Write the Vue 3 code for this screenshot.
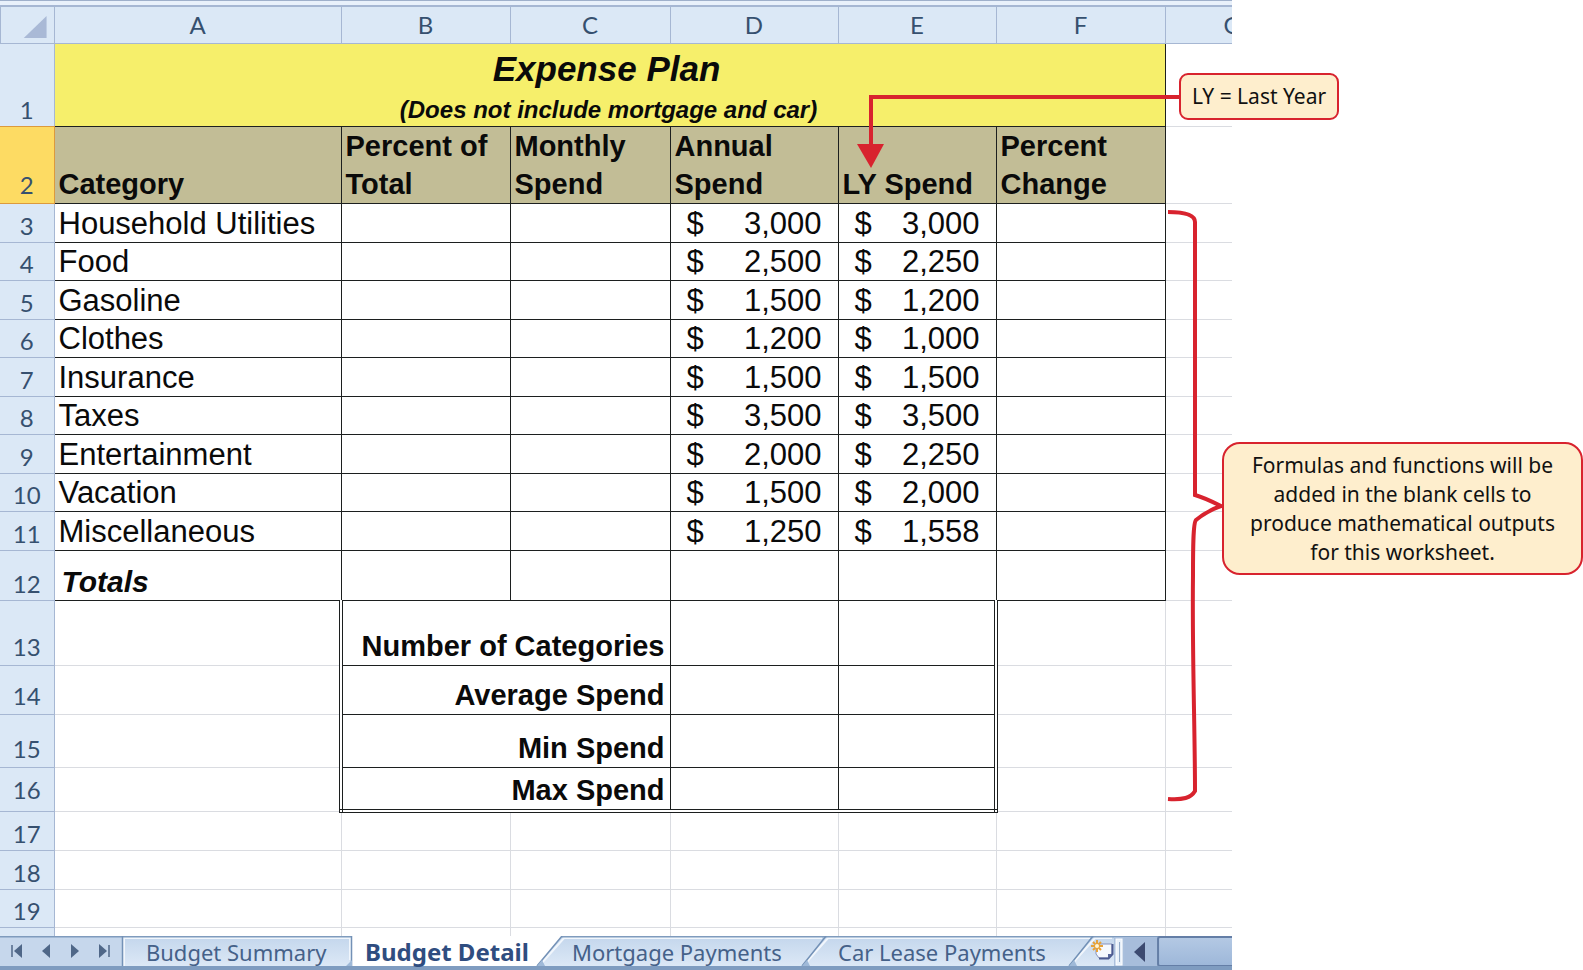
<script setup>
const columns = [
  { name: 'A', width: 287 },
  { name: 'B', width: 169 },
  { name: 'C', width: 160 },
  { name: 'D', width: 168 },
  { name: 'E', width: 158 },
  { name: 'F', width: 169 },
  { name: 'G', width: 67 },
]

const expenses = [
  { row: 3, height: 39, name: 'Household Utilities', annual: '3,000', last: '3,000' },
  { row: 4, height: 38, name: 'Food', annual: '2,500', last: '2,250' },
  { row: 5, height: 39, name: 'Gasoline', annual: '1,500', last: '1,200' },
  { row: 6, height: 38, name: 'Clothes', annual: '1,200', last: '1,000' },
  { row: 7, height: 39, name: 'Insurance', annual: '1,500', last: '1,500' },
  { row: 8, height: 38, name: 'Taxes', annual: '3,500', last: '3,500' },
  { row: 9, height: 39, name: 'Entertainment', annual: '2,000', last: '2,250' },
  { row: 10, height: 38, name: 'Vacation', annual: '1,500', last: '2,000' },
  { row: 11, height: 39, name: 'Miscellaneous', annual: '1,250', last: '1,558' },
]

const summaries = [
  { row: 13, height: 65, name: 'Number of Categories' },
  { row: 14, height: 49, name: 'Average Spend' },
  { row: 15, height: 53, name: 'Min Spend' },
  { row: 16, height: 44, name: 'Max Spend' },
]

const blanks = [
  { row: 17, height: 39 },
  { row: 18, height: 39 },
  { row: 19, height: 38 },
]
</script>

<template>
  <main class="page">
    <section class="window">
      <div class="strip"></div>
      <table class="sheet">
        <colgroup>
          <col class="col-head" />
          <col v-for="c in columns" :key="c.name" :style="{ width: c.width + 'px' }" />
        </colgroup>
        <thead>
          <tr class="letters">
            <th class="corner">
              <svg viewBox="0 0 54 34" aria-hidden="true">
                <path d="M47 8V30H24Z" fill="#a9b9d6" />
              </svg>
            </th>
            <th v-for="c in columns" :key="c.name" scope="col" :class="{ cut: c.name === 'G' }">{{ c.name }}</th>
          </tr>
        </thead>
        <tbody>
          <tr class="title-row">
            <th scope="row" class="num above-active">1</th>
            <td colspan="6" class="ink title">
              <div class="title-main">Expense Plan</div>
              <div class="title-sub">(Does not include mortgage and car)</div>
            </td>
            <td></td>
          </tr>
          <tr class="head-row">
            <th scope="row" class="num active">2</th>
            <td class="ink head">Category</td>
            <td class="ink head">Percent of<br />Total</td>
            <td class="ink head">Monthly<br />Spend</td>
            <td class="ink head">Annual<br />Spend</td>
            <td class="ink head">LY Spend</td>
            <td class="ink head">Percent<br />Change</td>
            <td></td>
          </tr>
          <tr v-for="e in expenses" :key="e.row" :style="{ height: e.height + 'px' }">
            <th scope="row" class="num">{{ e.row }}</th>
            <td class="ink">{{ e.name }}</td>
            <td class="ink"></td>
            <td class="ink"></td>
            <td class="ink"><div class="money"><span>$</span><span>{{ e.annual }}</span></div></td>
            <td class="ink"><div class="money"><span>$</span><span>{{ e.last }}</span></div></td>
            <td class="ink"></td>
            <td></td>
          </tr>
          <tr class="totals-row">
            <th scope="row" class="num">12</th>
            <td class="ink totals">Totals</td>
            <td v-for="n in 5" :key="n" class="ink"></td>
            <td></td>
          </tr>
          <tr v-for="(s, i) in summaries" :key="s.row" :style="{ height: s.height + 'px' }">
            <th scope="row" class="num low" :class="{ last: i === 3 }">{{ s.row }}</th>
            <td></td>
            <td colspan="2" class="ink label double-left" :class="{ 'double-bottom': i === 3 }">{{ s.name }}</td>
            <td class="ink" :class="{ 'double-bottom': i === 3 }"></td>
            <td class="ink double-right" :class="{ 'double-bottom': i === 3 }"></td>
            <td></td>
            <td></td>
          </tr>
          <tr v-for="b in blanks" :key="b.row" :style="{ height: b.height + 'px' }">
            <th scope="row" class="num">{{ b.row }}</th>
            <td v-for="n in 7" :key="n"></td>
          </tr>
          <tr class="partial">
            <th class="num"></th>
            <td v-for="n in 7" :key="n"></td>
          </tr>
        </tbody>
      </table>

      <nav class="tabs">
        <svg class="tabs-art" viewBox="0 0 1232 34" preserveAspectRatio="none" aria-hidden="true">
          <defs>
            <linearGradient id="tabFill" x1="0" y1="0" x2="0" y2="1">
              <stop offset="0" stop-color="#c3d6ec" />
              <stop offset="1" stop-color="#dce8f6" />
            </linearGradient>
            <linearGradient id="thumbFill" x1="0" y1="0" x2="0" y2="1">
              <stop offset="0" stop-color="#b4c9e4" />
              <stop offset="1" stop-color="#9db7d9" />
            </linearGradient>
          </defs>
          <rect width="1232" height="34" fill="#c6d7ec" />
          <path d="M122 0H1124V30H122Z" fill="url(#tabFill)" />
          <path d="M124 30V2H350V24M540 29L564 2H822M804 29L828 2H1090M1071 29L1095 2H1112" fill="none" stroke="#f1f6fc" stroke-width="2" />
          <path d="M352 0H562L537 30H352Z" fill="#fff" />
          <path d="M0 .5H352M562 .5H1232" stroke="#7f9bbd" stroke-width="2" />
          <path d="M122.500 0V30M351.500 0V30M562 0L537 30M826 0L802 30M1093 0L1069 30" fill="none" stroke="#7391b6" stroke-width="1.500" />
          <path d="M346 30l6-6v6zM537 30l5-6 3 6zM802 30l5-6 3 6zM1069 30l5-6 3 6z" fill="#9fb9d8" />
          <rect x="1114" y="1" width="10" height="29" fill="#a9bfdc" />
          <rect x="1116" y="3" width="6" height="26" fill="#e9f1fa" stroke="#fff" />
          <path d="M1119.500 6V26" stroke="#8fa8c8" />
          <rect x="1124" y="1" width="34" height="29" fill="#a7bddb" />
          <rect x="1158" y="1" width="78" height="29" rx="2" fill="url(#thumbFill)" stroke="#647ea6" stroke-width="2" />
          <rect y="30" width="1232" height="4" fill="#7f9cc0" />
        </svg>
        <div class="steps">
          <button type="button" aria-label="First sheet">
            <svg viewBox="0 0 14 14"><path d="M2 1V13" stroke="#4f6788" stroke-width="1.500" /><path d="M12 0V14L4 7Z" fill="#4f6788" /></svg>
          </button>
          <button type="button" aria-label="Previous sheet">
            <svg viewBox="0 0 14 14"><path d="M11 0V14L3 7Z" fill="#4f6788" /></svg>
          </button>
          <button type="button" aria-label="Next sheet">
            <svg viewBox="0 0 14 14"><path d="M3 0V14L11 7Z" fill="#4f6788" /></svg>
          </button>
          <button type="button" aria-label="Last sheet">
            <svg viewBox="0 0 14 14"><path d="M12 1V13" stroke="#4f6788" stroke-width="1.500" /><path d="M2 0V14L10 7Z" fill="#4f6788" /></svg>
          </button>
        </div>
        <button type="button" class="tab tab-summary">Budget Summary</button>
        <button type="button" class="tab tab-detail">Budget Detail</button>
        <button type="button" class="tab tab-mortgage">Mortgage Payments</button>
        <button type="button" class="tab tab-lease">Car Lease Payments</button>
        <button type="button" class="new-tab" aria-label="Insert worksheet">
          <svg viewBox="0 0 24 22">
            <path d="M5 4H21V15L17 18H8L5 14Z" fill="#f6f9fe" stroke="#8792bb" />
            <path d="M21.500 4V14L17.500 18.500H8" fill="none" stroke="#4c5a90" stroke-width="2" />
            <path d="M17 18V14H21Z" fill="#5a689c" />
            <path d="M6 0V12M0 6H12M2 2L10 10M10 2L2 10" stroke="#e6a23a" stroke-width="2" />
            <circle cx="6" cy="6" r="2" fill="#fff6d8" />
          </svg>
        </button>
        <button type="button" class="scroll-left" aria-label="Scroll left">
          <svg viewBox="0 0 12 20"><path d="M11 0V20L0 10Z" fill="#3c4a70" /></svg>
        </button>
      </nav>
    </section>

    <svg class="arrows" viewBox="0 0 1583 970" preserveAspectRatio="none" aria-hidden="true">
      <path d="M1180 97H871V148" fill="none" stroke="#d8232e" stroke-width="4" />
      <path d="M857 144H884L871 168Z" fill="#d8232e" />
      <path d="M1168 212C1184 212 1195 215 1195 222V495C1202 497 1211 501 1221 506C1210 510 1202 515 1196 520C1193 523 1193 550 1193 575C1192 650 1195 730 1195 791C1191 798 1183 800 1168 799" fill="none" stroke="#d8232e" stroke-width="4" />
    </svg>
    <aside class="note note-year">LY = Last Year</aside>
    <aside class="note note-formulas">
      Formulas and functions will be<br />added in the blank cells to<br />produce mathematical outputs<br />for this worksheet.
    </aside>
  </main>
</template>

<style>
body {
  margin: 0;
  background: #fff;
}
</style>

<style scoped>
.page {
  position: relative;
  font-family: "Liberation Sans", Arial, sans-serif;
  color: #0a0a0a;
}

.window {
  width: 77.83%;
  overflow: hidden;
}

.strip {
  box-sizing: border-box;
  height: 5px;
  border-top: 1px solid #9fb0cb;
  background: #e9f1fb;
}

.sheet {
  width: 100%;
  table-layout: fixed;
  border-collapse: collapse;
}

.col-head {
  width: 54px;
}

th,
td {
  box-sizing: border-box;
  padding: 0 4px;
  border: 1px solid #dadce1;
  font-size: 31px;
  line-height: 36px;
  font-weight: 400;
  text-align: left;
  vertical-align: bottom;
  white-space: nowrap;
}

.letters {
  height: 37px;
}

.letters th,
.num {
  border-color: #a6b7d3;
  background: #dbe8f6;
  color: #36506f;
  font-family: Lato, "Open Sans", sans-serif;
  font-size: 24px;
  line-height: 32px;
  text-align: center;
}

.letters th {
  padding: 0;
  border-top-width: 2px;
  vertical-align: middle;
}

.letters .cut {
  padding-left: 58px;
  text-align: left;
}

.letters .corner {
  border-left: 0;
  box-shadow: inset 1px 0 #a6b7d3;
}

.corner svg {
  display: block;
  width: 100%;
  height: 34px;
}

.num {
  padding: 0;
  border-left: 0;
}

.num.low {
  padding-bottom: 2px;
}

.num.last {
  padding-bottom: 5px;
}

.above-active {
  border-bottom-color: #dc9a3d;
}

.num.active {
  border-color: #dc9a3d;
  background: #fddb63;
  padding-bottom: 2px;
}

.ink {
  border-color: #1c1f1f;
}

.title-row {
  height: 83px;
}

.title {
  background: #f6ef6b;
  font-weight: 700;
  font-style: italic;
  text-align: center;
}

.title-main {
  padding: 0 6px 5px 0;
  font-size: 35px;
  line-height: 40px;
}

.title-sub {
  padding-right: 2px;
  font-size: 24px;
  line-height: 32px;
}

.head-row {
  height: 77px;
}

.head {
  background: #c2bd96;
  font-size: 29px;
  line-height: 38px;
  font-weight: 700;
}

.money {
  display: flex;
  justify-content: space-between;
  padding: 0 12px;
}

.totals-row {
  height: 50px;
}

.totals {
  padding-left: 7px;
  font-size: 30px;
  font-weight: 700;
  font-style: italic;
}

.label {
  padding-right: 5px;
  font-size: 29px;
  line-height: 38px;
  font-weight: 700;
  text-align: right;
}

.double-left {
  border-left: 4px double #1c1f1f;
}

.double-right {
  border-right: 4px double #1c1f1f;
}

.double-bottom {
  border-bottom: 4px double #1c1f1f;
}

.partial {
  height: 9px;
}

.partial th,
.partial td {
  border-bottom: 0;
  line-height: 0;
}

.tabs {
  position: relative;
  display: flex;
  height: 34px;
}

.tabs-art {
  position: absolute;
  inset: 0;
  width: 100%;
  height: 100%;
}

.tabs button {
  position: relative;
  box-sizing: border-box;
  flex: none;
  margin: 0;
  padding: 0;
  border: 0;
  background: none;
}

.steps {
  display: flex;
  flex: none;
  box-sizing: border-box;
  width: 9.9%;
  align-items: center;
  justify-content: space-between;
  padding: 0 11px 4px 10px;
}

.steps svg {
  display: block;
  width: 14px;
  height: 14px;
}

.tabs .tab {
  padding: 0 0 2px 24px;
  color: #456189;
  font-family: "Noto Sans", "Open Sans", sans-serif;
  font-size: 22px;
  line-height: 32px;
  text-align: left;
  white-space: nowrap;
}

.tabs .tab-summary {
  width: 18.67%;
}

.tabs .tab-detail {
  width: 16.07%;
  padding-left: 13px;
  color: #2f4d80;
  font-size: 24px;
  font-weight: 700;
}

.tabs .tab-mortgage {
  width: 21.43%;
  padding-left: 22px;
}

.tabs .tab-lease {
  width: 21.67%;
}

.tabs .new-tab {
  width: 3.5%;
  padding: 0 0 4px 10px;
}

.new-tab svg {
  display: block;
  width: 24px;
  height: 22px;
}

.tabs .scroll-left {
  width: 8.76%;
  padding: 0 0 2px 10px;
}

.scroll-left svg {
  display: block;
  width: 12px;
  height: 20px;
}

.arrows {
  position: absolute;
  inset: 0;
  width: 100%;
  height: 100%;
  pointer-events: none;
}

.note {
  position: absolute;
  box-sizing: border-box;
  border: 2px solid #d8232e;
  background: #feeecd;
  color: #111;
  font-family: "Noto Sans", "Open Sans", sans-serif;
  font-size: 21px;
  text-align: center;
  white-space: nowrap;
}

.note-year {
  top: 73px;
  left: 74.48%;
  width: 160px;
  padding: 7px 0;
  border-radius: 9px;
  line-height: 29px;
}

.note-formulas {
  top: 442px;
  right: 0;
  width: 361px;
  padding: 7px 0 6px;
  border-radius: 18px;
  line-height: 29px;
}
</style>
